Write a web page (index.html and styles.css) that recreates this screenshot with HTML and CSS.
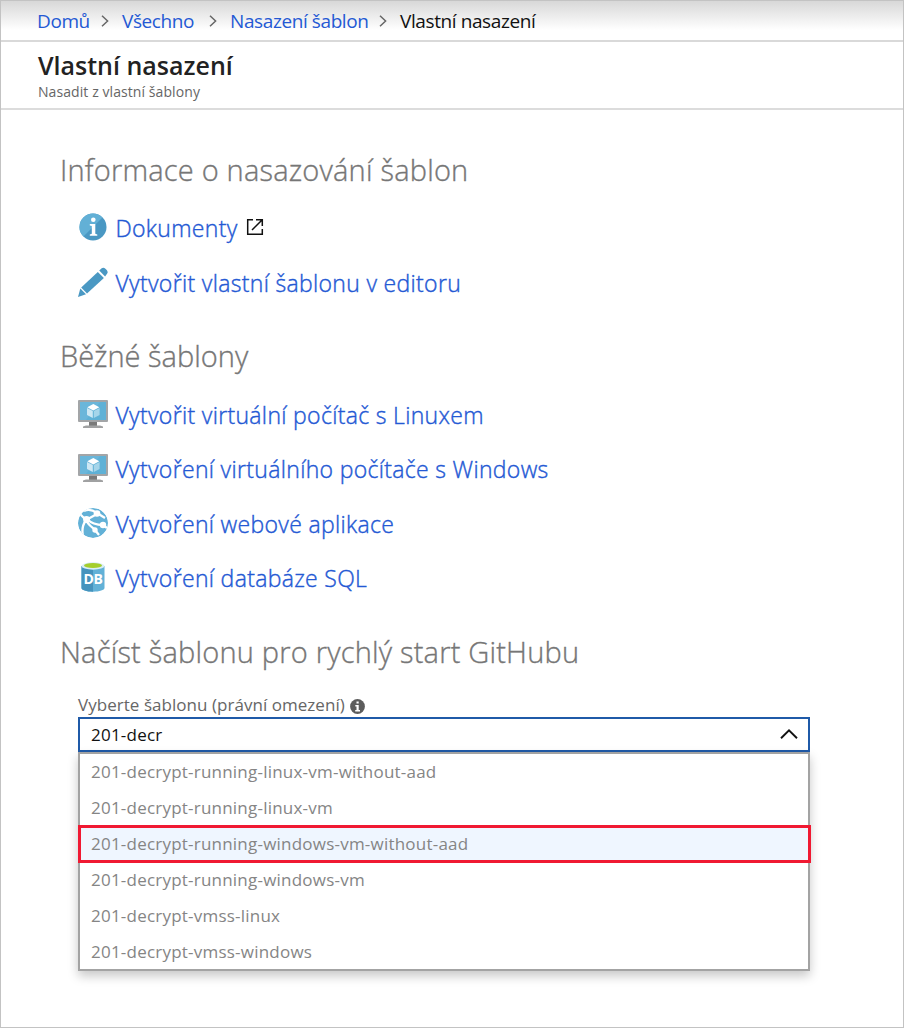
FILE: index.html
```html
<!DOCTYPE html>
<html lang="cs">
<head>
<meta charset="utf-8">
<title>Vlastní nasazení</title>
<link rel="stylesheet" href="styles.css">
</head>
<body>
<svg width="0" height="0" class="sprite">
  <symbol id="chevron" viewBox="0 0 8 12"><path d="M1 .8 6.6 6 1 11.2" fill="none" stroke="#666" stroke-width="1.5"/></symbol>
  <symbol id="monitor" viewBox="0 0 30 28">
    <path d="M11 21h8v5h-8z" fill="#7a7a7a"/><path d="M5 28v-1.500L8 25.500h14l3 1V28z" fill="#a0a1a2"/>
    <rect width="30" height="22" rx="1" fill="#a3a5a7"/><rect x="2" y="2" width="26" height="18" fill="#5fb1d6"/>
    <path d="M2 2h20L8 20H2z" fill="#6ab6da"/>
    <path d="m15.300 4 6 3.200-6 3.200-6-3.200z" fill="#fff"/><path d="m9 8 5.800 3.100v7L9 15z" fill="#cde8f4"/><path d="m21.600 8-5.800 3.100v7l5.800-3.100z" fill="#a5d5ea"/>
  </symbol>
</svg>
<div class="page">
  <nav class="crumbs">
    <a class="c1">Domů</a><svg class="sep"><use href="#chevron"/></svg>
    <a class="c2">Všechno</a><svg class="sep"><use href="#chevron"/></svg>
    <a class="c3">Nasazení šablon</a><svg class="sep"><use href="#chevron"/></svg>
    <span class="c4">Vlastní nasazení</span>
  </nav>
  <header class="head">
    <h1>Vlastní nasazení</h1>
    <p>Nasadit z vlastní šablony</p>
  </header>
  <main>
    <h2>Informace o nasazování šablon</h2>
    <ul class="links">
      <li>
        <svg class="icon" viewBox="0 0 30 30"><circle cx="15" cy="15" r="13.500" fill="#4a98c3"/><path d="M24.500 5.400A13.500 13.500 0 1 0 5.400 24.500z" fill="#62b0d6"/><circle cx="15.300" cy="7.700" r="2.300" fill="#fff"/><path d="M11.800 12h5.500v9.800l2 .7v1.300h-7.500v-1.300l2-.7v-7.700l-2-.7z" fill="#fff"/></svg>
        <a>Dokumenty</a>
        <svg class="ext" viewBox="0 0 18 18"><path d="M7 1.700H1.700v14.600h14.600V11M10 1.700h6.300V8M16 2 6 12" fill="none" stroke="#111" stroke-width="1.500"/></svg>
      </li>
      <li>
        <svg class="icon" viewBox="0 0 30 30"><g fill="#4a98c3"><path d="M3.200 20.500 19.800 4.900l6.100 6L9 26.400z"/><path d="m21.200 3.600 2.500-2.300c1.300-1.100 2.500-.7 4 .8s2.700 3 1.500 4.400l-2.100 2.900z"/><path d="m2.300 21.600 5.700 5.600L0 30z"/></g></svg>
        <a>Vytvořit vlastní šablonu v editoru</a>
      </li>
    </ul>
    <h2 class="h-common">Běžné šablony</h2>
    <ul class="links common">
      <li><svg class="icon monitor"><use href="#monitor"/></svg><a>Vytvořit virtuální počítač s Linuxem</a></li>
      <li><svg class="icon monitor"><use href="#monitor"/></svg><a>Vytvoření virtuálního počítače s Windows</a></li>
      <li>
        <svg class="icon" viewBox="0 0 30 30"><defs><clipPath id="globe"><circle cx="15" cy="15" r="15"/></clipPath></defs><g clip-path="url(#globe)"><circle cx="15" cy="15" r="15" fill="#62b1d7"/><g fill="none" stroke="#fff" stroke-width="2.300"><path d="M19 6 8 12M8 12q-5 7-3 16M9 11q6 6 16 6M8 12q3 6 10 10M2 6l6 6M19 5l8 5M25 17l4 3M17 22l4 5M19 5Q12 0 6 3"/></g><g fill="#fff"><circle cx="8.500" cy="11.500" r="3.400"/><circle cx="19" cy="5.500" r="3.300"/><circle cx="25" cy="17" r="3.200"/><circle cx="17" cy="22" r="2.700"/></g></g></svg>
        <a>Vytvoření webové aplikace</a>
      </li>
      <li>
        <svg class="icon" viewBox="0 0 30 30"><path d="M3.500 4v22c0 2 5 3.700 11.500 3.700S26.500 28 26.500 26V4z" fill="#62b1d7"/><path d="M3.500 4v22c0 2 5 3.700 11.500 3.700V4z" fill="#4593bd"/><ellipse cx="15" cy="4" rx="11.500" ry="3.700" fill="#d9edf6"/><ellipse cx="15" cy="3.600" rx="9" ry="2.500" fill="#a5ce2c"/><text x="15" y="22" class="db">DB</text></svg>
        <a>Vytvoření databáze SQL</a>
      </li>
    </ul>
    <h2>Načíst šablonu pro rychlý start GitHubu</h2>
    <div class="picker">
      <label>Vyberte šablonu (právní omezení)<svg class="info" viewBox="0 0 15 15"><circle cx="7.500" cy="7.500" r="7.400" fill="#5c5c5c"/><path d="M6.500 2.500h2.200v2H6.500zM5.300 6h3.400v5h1.300v1.400H5.200V11h1.300V7.400H5.300z" fill="#fff"/></svg></label>
      <div class="combo"><span>201-decr</span><svg viewBox="0 0 18 10"><path d="M1 9.300 9 1.400l8 7.900" fill="none" stroke="#111" stroke-width="1.900"/></svg></div>
      <ul class="menu">
        <li>201-decrypt-running-linux-vm-without-aad</li>
        <li>201-decrypt-running-linux-vm</li>
        <li class="selected">201-decrypt-running-windows-vm-without-aad</li>
        <li>201-decrypt-running-windows-vm</li>
        <li>201-decrypt-vmss-linux</li>
        <li>201-decrypt-vmss-windows</li>
      </ul>
    </div>
  </main>
</div>
</body>
</html>
```
FILE: styles.css
```css
* { box-sizing: border-box; margin: 0; padding: 0; }
body { background: #fff; font-family: "Open Sans", "Noto Sans", sans-serif; }
.sprite { display: block; }
.page { width: 904px; height: 1028px; border: 1px solid #c3c3c3; overflow: hidden; }
.crumbs { height: 41px; display: flex; align-items: center; padding-left: 36px; font-size: 19px; letter-spacing: -.4px; white-space: nowrap; color: #111; background: linear-gradient(#d8d8d8, #fff 29px); border-bottom: 2px solid #d9d9d9; }
.crumbs a, .links a { color: #2459d4; }
.crumbs a, .crumbs span { line-height: 38px; }
.c1 { width: 64px; }
.c2 { width: 87px; }
.c3 { width: 149px; }
.sep { width: 8px; height: 12px; margin-right: 13px; }
.head { height: 68px; padding: 7px 0 0 37px; border-bottom: 2px solid #dcdcdc; }
h1 { font-size: 25px; font-weight: 600; line-height: 33px; color: #222; }
.head p { font-size: 14px; line-height: 20px; letter-spacing: .08px; color: #666; }
main { padding: 40px 0 0 59px; }
h2 { font-size: 29px; line-height: 40px; font-weight: 300; letter-spacing: .2px; color: #767676; -webkit-text-stroke: .35px #767676; white-space: nowrap; }
.h-common { letter-spacing: 0; }
.links { list-style: none; padding-left: 18px; margin: 10px 0 27px; }
.common { margin: 10.600px 0 27.400px; }
.links li { height: 54.500px; display: flex; align-items: center; }
.links a { font-size: 23px; font-weight: 300; letter-spacing: .32px; -webkit-text-stroke: .4px #2459d4; margin: 2px 0 0 7.500px; white-space: nowrap; }
.icon { width: 30px; height: 30px; }
.monitor { height: 28px; }
.ext { width: 18px; height: 18px; margin-left: 8px; }
.db { font: bold 14px "Open Sans", sans-serif; letter-spacing: -.5px; fill: #fff; text-anchor: middle; }
.picker { width: 732px; margin: 23px 0 0 18px; }
label { display: flex; align-items: center; height: 22px; padding-bottom: 2px; font-size: 17px; letter-spacing: .04px; color: #666; }
.info { width: 15px; height: 15px; margin: 4px 0 0 5px; }
.combo { height: 35px; border: 2px solid #1f5aa8; display: flex; align-items: center; justify-content: space-between; padding: 0 10px 0 11px; font-size: 17px; letter-spacing: .22px; color: #111; }
.combo svg { width: 18px; height: 10px; }
.menu { list-style: none; height: 219px; border: 2px solid #a3a3a3; font-size: 17px; line-height: 36px; letter-spacing: .22px; color: #858585; box-shadow: 0 5px 10px rgba(0,0,0,.22); }
.menu li { height: 36px; padding-left: 11px; white-space: nowrap; }
.menu .selected { height: 38px; line-height: 32px; margin: -1px -3px -1px -2px; padding-left: 10px; background: #eff6ff; border: 3px solid #f01932; }
```
